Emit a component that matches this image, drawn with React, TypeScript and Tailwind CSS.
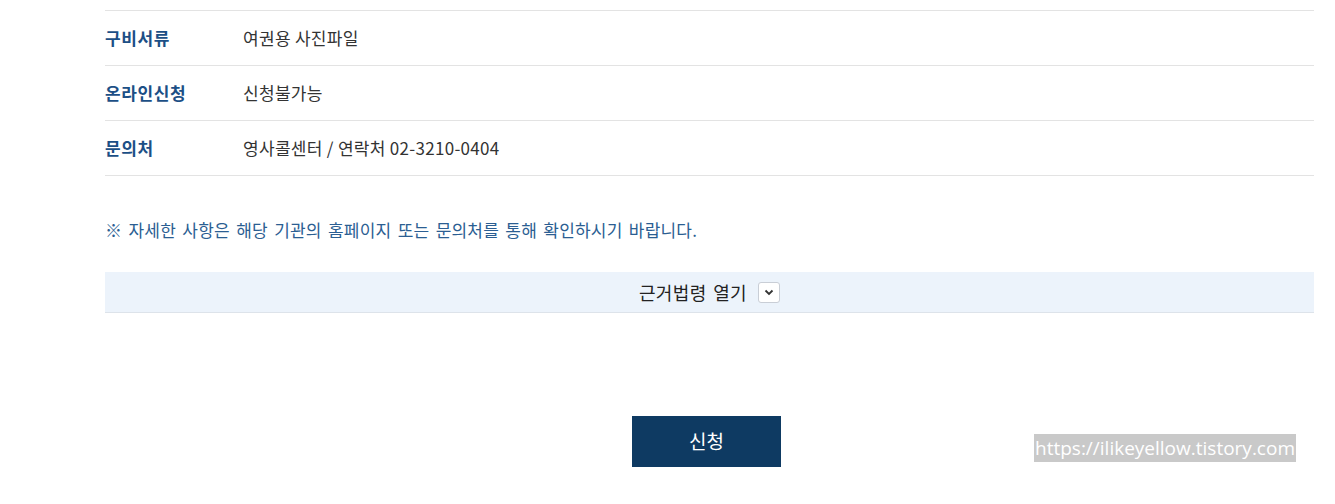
import React from 'react'

const rows = [
  { label: '구비서류', value: '여권용 사진파일' },
  { label: '온라인신청', value: '신청불가능' },
  { label: '문의처', value: '영사콜센터 / 연락처 02-3210-0404' },
]

const App = () => {
  return (
    <div className="relative w-[1335px] h-[504px] bg-white overflow-hidden font-['Noto_Sans_CJK_KR',sans-serif]">
      <div className="ml-[105px] w-[1209px] pt-[10px]">
        {/* Info table */}
        <div className="border-t border-[#e3e3e3]">
          {rows.map((row) => (
            <div key={row.label} className="flex items-center h-[55px] border-b border-[#e3e3e3]">
              <div className="w-[138px] text-[17px] font-bold text-[#1c4f86] tracking-[0.6px]">{row.label}</div>
              <div className="text-[17px] text-[#333] tracking-[0.3px]">{row.value}</div>
            </div>
          ))}
        </div>

        {/* Notice */}
        <p className="mt-[40px] text-[17px] text-[#2b5e92] tracking-[0.2px] [word-spacing:2.3px] leading-[28px]">
          ※ 자세한 사항은 해당 기관의 홈페이지 또는 문의처를 통해 확인하시기 바랍니다.
        </p>

        {/* Accordion */}
        <div className="mt-[28px] h-[41px] bg-[#ecf3fb] border-b border-[#dde3ea] flex items-center justify-center gap-[11px]">
          <span className="text-[18px] text-[#222] tracking-[0.4px] [word-spacing:2px]">근거법령 열기</span>
          <span className="w-[22px] h-[21px] bg-white border border-[#c9ced6] rounded-[3px] flex items-center justify-center">
            <svg width="10" height="7" viewBox="0 0 10 7" fill="none">
              <path d="M1.5 1.5 L5 5 L8.5 1.5" stroke="#333" strokeWidth="1.8" />
            </svg>
          </span>
        </div>

        {/* Submit */}
        <div className="flex justify-center mt-[103px] pr-[6px]">
          <button className="w-[149px] h-[51px] bg-[#0e3a62] text-white text-[19px]">신청</button>
        </div>
      </div>

      {/* Watermark */}
      <div className="absolute left-[1034px] top-[434px] h-[28px] px-[1px] bg-[#c9c9c9] text-white text-[19px] leading-[28px] font-['Open_Sans',sans-serif]">
        https://ilikeyellow.tistory.com
      </div>
    </div>
  )
}

export default App
